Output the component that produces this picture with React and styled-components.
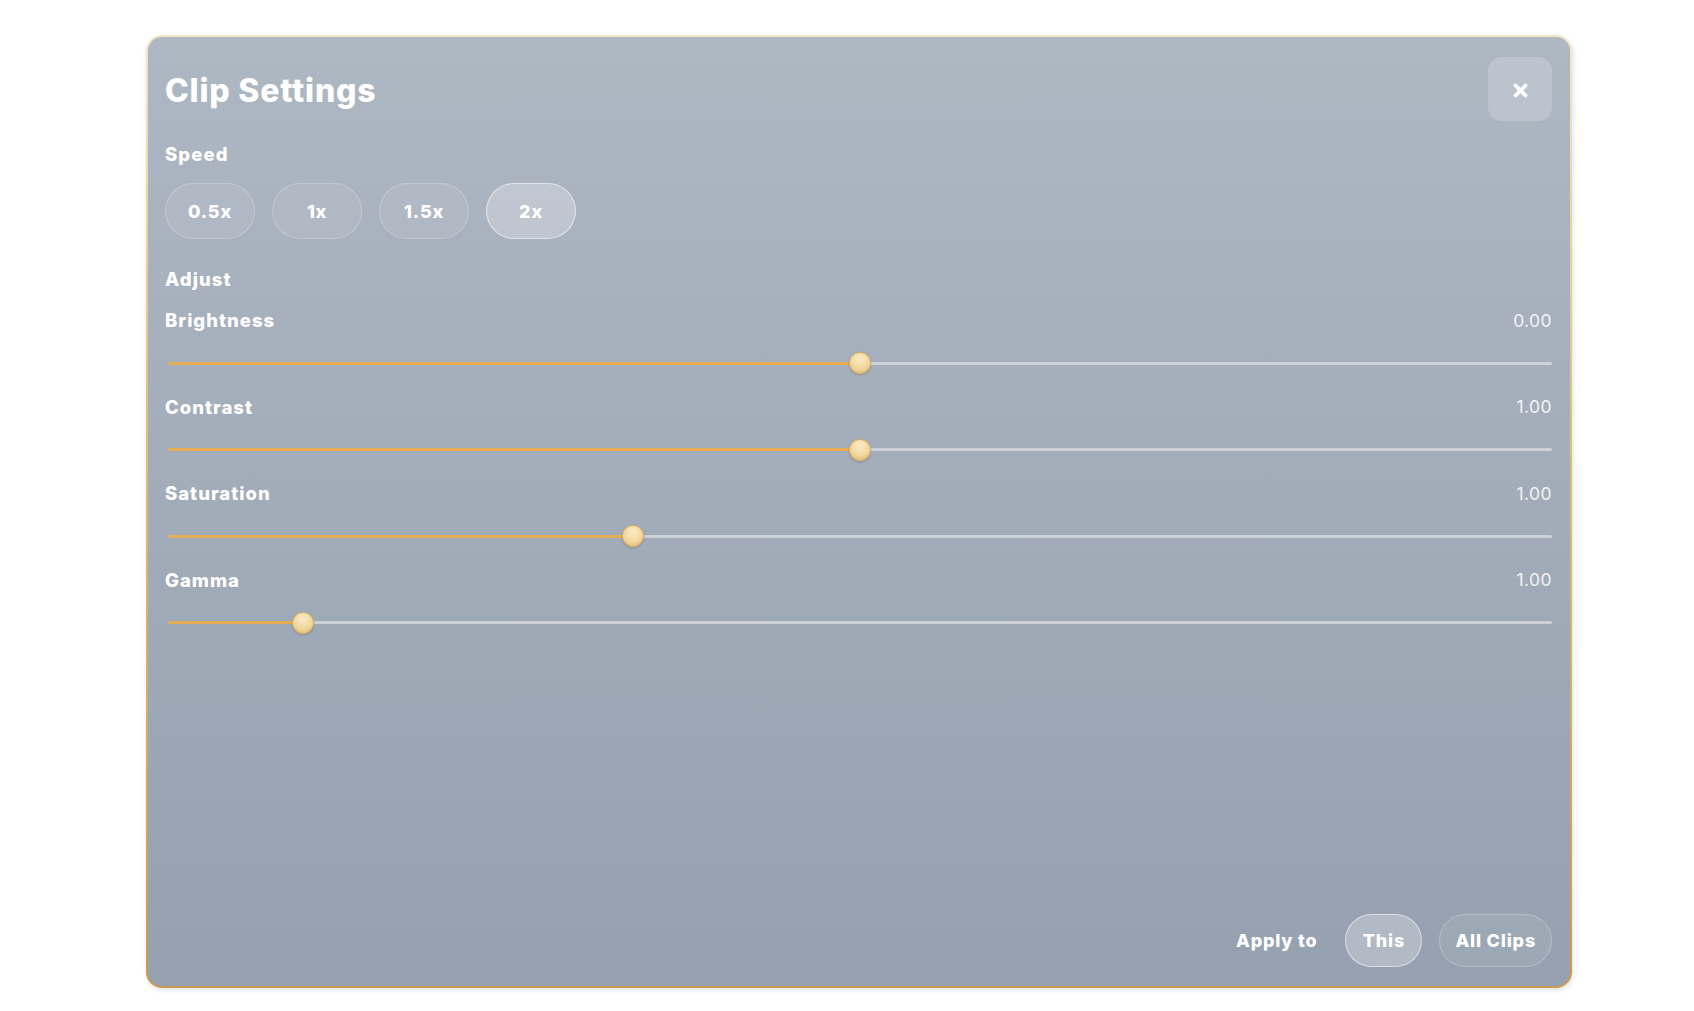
import React from "react";
import styled, { createGlobalStyle } from "styled-components";

const Global = createGlobalStyle`
  html, body { margin: 0; padding: 0; background: #ffffff; }
  body { font-family: "Inter", "Noto Sans", "Liberation Sans", sans-serif; }
  * { box-sizing: border-box; }
`;

const Page = styled.div`
  width: 1694px;
  height: 1011px;
  padding: 35px 0 0 146px;
`;

const Panel = styled.section`
  width: 1426px;
  height: 953px;
  border: 2px solid transparent;
  border-radius: 16px;
  background:
    linear-gradient(180deg, #aeb8c3 0%, #a3adba 45%, #95a1b0 100%) padding-box,
    linear-gradient(180deg, #f4e7c8 0%, #e2c078 40%, #c99a52 100%) border-box;
  box-shadow: 1px 2px 5px rgba(0, 0, 0, 0.12);
  padding: 20px 18px 19px 17px;
  display: flex;
  flex-direction: column;
  color: #ffffff;
`;

const Header = styled.header`
  display: flex;
  align-items: center;
  justify-content: space-between;
  height: 64px;
`;

const Title = styled.h1`
  margin: 4px 0 0 0;
  font-size: 32px;
  font-weight: 800;
  letter-spacing: 0.8px;
  line-height: 1;
`;

const CloseButton = styled.button`
  width: 64px;
  height: 64px;
  border: none;
  border-radius: 14px;
  background: rgba(255, 255, 255, 0.18);
  display: flex;
  align-items: center;
  justify-content: center;
  padding: 2px 0 0 0;
  cursor: pointer;
`;

const SectionLabel = styled.div`
  font-size: 18.5px;
  font-weight: 800;
  letter-spacing: 1.1px;
  line-height: 22px;
  margin-top: ${(p) => p.$top}px;
`;

const PillRow = styled.div`
  display: flex;
  gap: 17px;
  margin-top: ${(p) => p.$top || 0}px;
  align-items: center;
`;

const Pill = styled.button`
  height: ${(p) => p.$h}px;
  min-width: ${(p) => p.$min || 0}px;
  padding: 0 15px;
  border-radius: 999px;
  font-family: inherit;
  font-size: 18px;
  font-weight: 800;
  letter-spacing: 0.8px;
  color: #ffffff;
  cursor: pointer;
  background: ${(p) => (p.$active ? "rgba(255,255,255,0.26)" : "rgba(255,255,255,0.07)")};
  border: 1.5px solid ${(p) => (p.$active ? "rgba(255,255,255,0.55)" : "rgba(255,255,255,0.22)")};
`;

const AdjustRow = styled.div`
  margin-top: ${(p) => p.$top}px;
  display: flex;
  flex-direction: column;
  gap: 21px;
`;

const RowHead = styled.div`
  display: flex;
  justify-content: space-between;
  align-items: center;
  height: 22px;
`;

const RowLabel = styled.span`
  font-size: 18.5px;
  font-weight: 800;
  letter-spacing: 1px;
`;

const RowValue = styled.span`
  font-size: 17.5px;
  font-weight: 400;
  letter-spacing: 0.4px;
  color: rgba(255, 255, 255, 0.88);
`;

const SliderBox = styled.div`
  position: relative;
  height: 22px;
  margin-left: 3px;
  display: flex;
  align-items: center;
`;

const Track = styled.div`
  width: 100%;
  height: 3px;
  border-radius: 2px;
  background: rgba(255, 255, 255, 0.45);
  overflow: hidden;
`;

const Fill = styled.div`
  height: 100%;
  background: #e2ad55;
`;

const Thumb = styled.div`
  position: absolute;
  top: 0;
  width: 22px;
  height: 22px;
  border-radius: 50%;
  background: radial-gradient(circle at 50% 30%, #fbecc6 0%, #f1d79f 55%, #ddb66b 100%);
  border: 1px solid rgba(196, 152, 80, 0.55);
  box-shadow: 0 1px 2px rgba(80, 60, 20, 0.3);
`;

const Footer = styled.footer`
  margin-top: auto;
  display: flex;
  justify-content: flex-end;
  align-items: center;
  gap: 17px;
`;

const ApplyLabel = styled.span`
  font-size: 18px;
  font-weight: 800;
  letter-spacing: 0.8px;
  margin-right: 11px;
`;

const sliders = [
  { name: "Brightness", value: 0, min: -1, max: 1 },
  { name: "Contrast", value: 1, min: 0, max: 2 },
  { name: "Saturation", value: 1, min: 0, max: 3 },
  { name: "Gamma", value: 1, min: 0.1, max: 10 },
];

function Slider({ value, min, max }) {
  const p = (value - min) / (max - min);
  const center = `calc(11px + ${p} * (100% - 22px))`;
  return (
    <SliderBox>
      <Track>
        <Fill style={{ width: center }} />
      </Track>
      <Thumb style={{ left: `calc(${p} * (100% - 22px))` }} />
    </SliderBox>
  );
}

export default function App() {
  return (
    <>
      <Global />
      <Page>
        <Panel>
          <Header>
            <Title>Clip Settings</Title>
            <CloseButton aria-label="Close">
              <svg width="17" height="17" viewBox="0 0 17 17">
                <path
                  d="M3.5 3.5 L13.5 13.5 M13.5 3.5 L3.5 13.5"
                  stroke="#ffffff"
                  strokeWidth="3.8"
                  strokeLinecap="round"
                  fill="none"
                />
              </svg>
            </CloseButton>
          </Header>

          <SectionLabel $top={22}>Speed</SectionLabel>
          <PillRow $top={18}>
            {["0.5x", "1x", "1.5x", "2x"].map((s) => (
              <Pill key={s} $h={56} $min={90} $active={s === "2x"}>
                {s}
              </Pill>
            ))}
          </PillRow>

          <SectionLabel $top={29}>Adjust</SectionLabel>
          {sliders.map((s, i) => (
            <AdjustRow key={s.name} $top={i === 0 ? 19 : 21.5}>
              <RowHead>
                <RowLabel>{s.name}</RowLabel>
                <RowValue>{s.value.toFixed(2)}</RowValue>
              </RowHead>
              <Slider value={s.value} min={s.min} max={s.max} />
            </AdjustRow>
          ))}

          <Footer>
            <ApplyLabel>Apply to</ApplyLabel>
            <Pill $h={53} $min={77} $active>
              This
            </Pill>
            <Pill $h={53}>All Clips</Pill>
          </Footer>
        </Panel>
      </Page>
    </>
  );
}
